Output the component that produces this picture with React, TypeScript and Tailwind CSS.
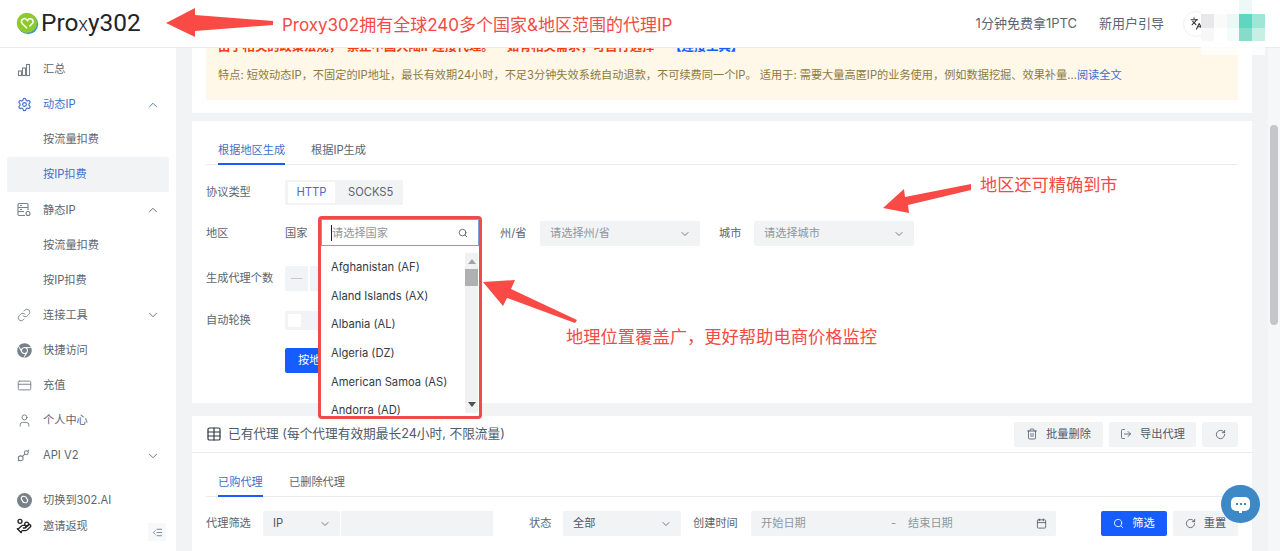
import {
  Calendar,
  ChevronDown,
  ChevronUp,
  CreditCard,
  HandCoins,
  IndentDecrease,
  Languages,
  Link,
  LogOut,
  RotateCw,
  Search,
  Settings,
  Table,
  Trash2,
  User,
} from 'lucide-react'
import { FaChrome } from 'react-icons/fa'

const font = { cjk: "font-['Inter','Noto_Sans_CJK_SC',sans-serif]" }

const countries = [
  'Afghanistan (AF)',
  'Aland Islands (AX)',
  'Albania (AL)',
  'Algeria (DZ)',
  'American Samoa (AS)',
  'Andorra (AD)',
]

function NavItem({ icon, label, active, chevron }: { icon: React.ReactNode; label: string; active?: boolean; chevron?: 'up' | 'down' }) {
  return (
    <div className={`flex h-[35.1px] items-center pl-[17px] pr-[16px] ${active ? 'text-[#3f6fc9]' : 'text-[#5c6570]'}`}>
      <span className={`flex w-[26px] shrink-0 ${active ? '' : 'text-[#78808a]'}`}>{icon}</span>
      <span className="flex-1">{label}</span>
      {chevron === 'up' && <ChevronUp className="h-[14px] w-[14px]" strokeWidth={1.5} />}
      {chevron === 'down' && <ChevronDown className="h-[14px] w-[14px]" strokeWidth={1.5} />}
    </div>
  )
}

function SubItem({ label, active }: { label: string; active?: boolean }) {
  return (
    <div className={`mx-[7px] flex h-[35.1px] items-center rounded-[2px] pl-[36px] ${active ? 'bg-[#f2f3f5] text-[#3f6fc9]' : 'text-[#5c6570]'}`}>
      {label}
    </div>
  )
}

function BarsIcon() {
  return (
    <svg viewBox="0 0 14 14" className="h-[14px] w-[14px]" fill="none" stroke="currentColor" strokeWidth="1.1">
      <path d="M1 12.5h12" />
      <rect x="1.5" y="8" width="3" height="4.5" />
      <rect x="5.5" y="5" width="3" height="7.5" />
      <rect x="9.5" y="1.5" width="3" height="11" />
    </svg>
  )
}

function StorageIcon() {
  return (
    <svg viewBox="0 0 14 15" className="h-[15px] w-[14px]" fill="none" stroke="currentColor" strokeWidth="1.1">
      <path d="M8 13.5H2a1 1 0 0 1-1-1v-10a1 1 0 0 1 1-1h8a1 1 0 0 1 1 1V8" />
      <path d="M1 5.5h10M1 9.5h6" />
      <path d="M3 3.5h2M3 7.5h2" />
      <circle cx="11" cy="11.5" r="2" />
    </svg>
  )
}

function ApiIcon() {
  return (
    <svg viewBox="0 0 14 14" className="h-[13px] w-[13px]" fill="none" stroke="currentColor" strokeWidth="1.1">
      <circle cx="4" cy="10" r="2.6" />
      <circle cx="10" cy="4" r="2.1" />
      <path d="M6 8l2.4-2.4M11.5 2.5l1.5-1.5M1 13l1-1" />
    </svg>
  )
}

function SwitchIcon() {
  return (
    <svg viewBox="0 0 15 15" className="mr-[11px] h-[15px] w-[15px]">
      <circle cx="7.5" cy="7.5" r="7.5" fill="#78808a" />
      <path d="M7.5 3.5a2 2 0 0 1 2 2 2 2 0 1 1-2 4 2 2 0 0 1-2-2 2 2 0 1 1 2-4z" fill="none" stroke="#fff" strokeWidth="1.1" />
    </svg>
  )
}

function Sidebar() {
  const ic = 'h-[15px] w-[15px]'
  return (
    <aside className="relative flex w-[176px] shrink-0 flex-col bg-white pt-[4px] text-[11.2px]">
      <NavItem icon={<BarsIcon />} label="汇总" />
      <NavItem icon={<Settings className={ic} strokeWidth={1.8} />} label="动态IP" active chevron="up" />
      <SubItem label="按流量扣费" />
      <SubItem label="按IP扣费" active />
      <NavItem icon={<StorageIcon />} label="静态IP" chevron="up" />
      <SubItem label="按流量扣费" />
      <SubItem label="按IP扣费" />
      <NavItem icon={<Link className="h-[14px] w-[14px]" strokeWidth={1.5} />} label="连接工具" chevron="down" />
      <NavItem icon={<FaChrome className={ic} />} label="快捷访问" />
      <NavItem icon={<CreditCard className={ic} strokeWidth={1.5} />} label="充值" />
      <NavItem icon={<User className={ic} strokeWidth={1.5} />} label="个人中心" />
      <NavItem icon={<ApiIcon />} label="API V2" chevron="down" />
      <div className="mt-[14px] flex h-[26px] items-center pl-[17px] text-[#5c6570]">
        <SwitchIcon />
        切换到302.AI
      </div>
      <div className="flex h-[26px] items-center pl-[16px] text-[#5c6570]">
        <HandCoins className="mr-[11px] h-[16px] w-[16px] text-[#222]" strokeWidth={2} />
        邀请返现
      </div>
      <div className="absolute bottom-[10px] right-[10px] flex h-[18px] w-[18px] items-center justify-center bg-[#f7f8fa]">
        <IndentDecrease className="h-[11px] w-[11px] text-[#4e5969]" strokeWidth={1.5} />
      </div>
    </aside>
  )
}

function Label({ children, className = '' }: { children: React.ReactNode; className?: string }) {
  return <span className={`text-[11.2px] text-[#5c6570] ${className}`}>{children}</span>
}

function Select({ text, width, placeholder }: { text: string; width: string; placeholder?: boolean }) {
  return (
    <div className={`flex h-[25px] items-center justify-between rounded-[2px] bg-[#f2f3f5] pl-[10px] pr-[9px] ${width}`}>
      <span className={placeholder ? 'text-[#8f97a1]' : 'text-[#4e5969]'}>{text}</span>
      <ChevronDown className="h-[12px] w-[12px] text-[#4e5969]" strokeWidth={1.6} />
    </div>
  )
}

function Tabs({ active, other, width }: { active: string; other: string; width: string }) {
  return (
    <div className="flex h-[30px] border-b border-[#e9ebef] pl-[12px] text-[11.2px]">
      <div className={`relative flex h-[30px] items-start whitespace-nowrap pt-[7px] text-[#3f6fc9] ${width}`}>
        {active}
        <span className="absolute bottom-0 left-0 h-[2px] w-full bg-[#165dff]" />
      </div>
      <div className="ml-[26px] pt-[7px] text-[#5c6570]">{other}</div>
    </div>
  )
}

function GreyButton({ icon, label, width }: { icon: React.ReactNode; label?: string; width: string }) {
  return (
    <div className={`flex h-[25px] items-center justify-center gap-[8px] rounded-[2px] bg-[#f2f3f5] text-[11.2px] text-[#4e5969] ${width}`}>
      {icon}
      {label && <span>{label}</span>}
    </div>
  )
}

function Dropdown() {
  return (
    <div className="absolute left-[318px] top-[216px] z-20 h-[203px] w-[164px] overflow-hidden rounded-[4px] border-[3px] border-[#f04a4a] bg-white">
      <div className="flex h-[27px] items-center justify-between border border-[#7d9fd8] pl-[9px] pr-[10px] pt-[1px] text-[11.2px] text-[#8f97a1]">
        <span className="border-l border-[#222]">请选择国家</span>
        <Search className="h-[10px] w-[10px] text-[#4e5969]" strokeWidth={2} />
      </div>
      <div className="flex h-[170px] pt-[7px]">
        <div className="flex-1 pl-[10px] text-[11.2px] text-[#333b45]">
          {countries.map((c) => (
            <div key={c} className="flex h-[28.7px] items-center whitespace-nowrap">
              {c}
            </div>
          ))}
        </div>
        <div className="relative mr-[1px] h-[160px] w-[13px] bg-[#f1f1f1]">
          <span className="absolute left-[3px] top-[6px] h-0 w-0 border-x-[4px] border-b-[5px] border-x-transparent border-b-[#a3a3a3]" />
          <div className="absolute top-[16px] h-[17px] w-full bg-[#b0b0b0]" />
          <span className="absolute bottom-[6px] left-[3px] h-0 w-0 border-x-[4px] border-t-[5px] border-x-transparent border-t-[#505050]" />
        </div>
      </div>
    </div>
  )
}

export default function App() {
  return (
    <div className={`relative flex h-screen flex-col overflow-hidden bg-[#f2f3f5] ${font.cjk}`}>
      {/* Header */}
      <header className="relative z-10 flex h-[48px] shrink-0 items-center border-b border-[#e9ebef] bg-white pl-[16px] pr-[71px]">
        <svg viewBox="0 0 24 24" className="mr-[2px] h-[23px] w-[23px]">
          <circle cx="12.6" cy="12.6" r="10.6" fill="#3f96d8" />
          <circle cx="11.4" cy="11.4" r="10.6" fill="#8ccb2a" />
          <path d="M11.5 17 L6.5 12 a3 3 0 0 1 4.5 -4 l1 1 a3 3 0 1 1 4.5 3.5 L14 15" fill="none" stroke="#fff" strokeWidth="1.6" />
        </svg>
        <span className="text-[24.4px] leading-none text-[#20242a] font-['Roboto',sans-serif]">
          Pro<span className="text-[20px] font-light">x</span>y302
        </span>
        <div className="ml-auto flex items-center text-[13px] text-[#5c6570]">
          <span>1分钟免费拿1PTC</span>
          <span className="ml-[22px]">新用户引导</span>
          <span className="ml-[19px] flex h-[26px] w-[26px] items-center justify-center rounded-full border border-[#eef0f2]">
            <Languages className="h-[13px] w-[13px] text-[#333]" strokeWidth={2} />
          </span>
        </div>
      </header>

      <div className="flex min-h-0 flex-1">
        <Sidebar />

        <main className="flex min-w-0 flex-1 flex-col gap-[8px] overflow-hidden pl-[16px] pr-[16px]">
          {/* Notice */}
          <section className="-mt-[20px] h-[85px] shrink-0 bg-white px-[14px] pt-[8px]">
            <div className="h-[64px] bg-[#fff7e8] pl-[12px] text-[11.2px]">
              <div className="h-[31px] whitespace-nowrap text-[12.3px] font-bold leading-[22px] text-[#f0400f]">
                <span>由于相关的政策法规，</span>
                <span className="ml-[6px]">禁止中国大陆IP连接代理。</span>
                <span className="ml-[13px]">如有相关需求，可自行选择</span>
                <span className="ml-[15px] text-[#165dff]">【连接工具】</span>
              </div>
              <div className="whitespace-nowrap text-[#8d7a3f]">
                特点: 短效动态IP，不固定的IP地址，最长有效期24小时，不足3分钟失效系统自动退款，不可续费同一个IP。 适用于: 需要大量高匿IP的业务使用，例如数据挖掘、效果补量...
                <span className="text-[#3f6fc9]">阅读全文</span>
              </div>
            </div>
          </section>

          {/* Generate */}
          <section className="h-[282px] shrink-0 bg-white px-[14px] pt-[14px] text-[11.2px]">
            <Tabs active="根据地区生成" other="根据IP生成" width="w-[67px]" />
            <div className="mt-[15px] flex items-center">
              <Label className="w-[79px]">协议类型</Label>
              <div className="flex h-[25px] w-[118px] items-center rounded-[2px] bg-[#f2f3f5] p-[2px] pl-[3px]">
                <span className="flex h-[21px] w-[47px] items-center justify-center bg-white text-[#3f6fc9]">HTTP</span>
                <span className="ml-[13px] text-[#5c6570]">SOCKS5</span>
              </div>
            </div>
            <div className="mt-[16px] flex items-center">
              <Label className="w-[79px]">地区</Label>
              <Label className="w-[36px]">国家</Label>
              <div className="h-[25px] w-[157px]" />
              <Label className="ml-[22px] w-[40px]">州/省</Label>
              <Select text="请选择州/省" width="w-[160px]" placeholder />
              <Label className="ml-[19px] w-[35px]">城市</Label>
              <Select text="请选择城市" width="w-[160px]" placeholder />
            </div>
            <div className="mt-[20px] flex items-center">
              <Label className="w-[79px]">生成代理个数</Label>
              <div className="flex h-[25px] w-[120px] rounded-[2px] bg-[#f2f3f5]">
                <span className="flex w-[25px] items-center justify-center border-r-2 border-white text-[#c3c8cf]">—</span>
              </div>
            </div>
            <div className="mt-[20px] flex items-center">
              <Label className="w-[79px]">自动轮换</Label>
              <div className="flex h-[19px] w-[40px] items-center rounded-[2px] bg-[#f2f3f5] pl-[3px]">
                <span className="h-[13px] w-[13px] bg-white" />
              </div>
            </div>
            <div className="ml-[79px] mt-[18px] flex h-[25px] w-[60px] items-center rounded-[2px] bg-[#165dff] pl-[13px] text-white">
              按地
            </div>
          </section>

          {/* Proxy list */}
          <section className="mt-[5px] flex-1 bg-white text-[11.2px]">
            <div className="flex h-[37px] items-center border-b border-[#e9ebef] px-[14px]">
              <Table className="mr-[6px] h-[16px] w-[16px] text-[#333b45]" strokeWidth={1.8} />
              <span className="text-[12.7px] text-[#4e5969]">已有代理 (每个代理有效期最长24小时, 不限流量)</span>
              <div className="ml-auto flex gap-[6px]">
                <GreyButton icon={<Trash2 className="h-[12px] w-[12px]" strokeWidth={1.6} />} label="批量删除" width="w-[89px]" />
                <GreyButton icon={<LogOut className="h-[12px] w-[12px]" strokeWidth={1.6} />} label="导出代理" width="w-[87px]" />
                <GreyButton icon={<RotateCw className="h-[11px] w-[11px]" strokeWidth={1.8} />} width="w-[36px]" />
              </div>
            </div>
            <div className="px-[14px] pt-[14px]">
              <Tabs active="已购代理" other="已删除代理" width="w-[45px]" />
              <div className="mt-[14px] flex items-center">
                <Label className="w-[57px]">代理筛选</Label>
                <Select text="IP" width="w-[77px]" />
                <div className="ml-[1px] h-[25px] w-[152px] bg-[#f2f3f5]" />
                <Label className="ml-[36px] w-[34px]">状态</Label>
                <Select text="全部" width="w-[118px]" />
                <Label className="ml-[12px] w-[58px]">创建时间</Label>
                <div className="flex h-[25px] w-[305px] items-center rounded-[2px] bg-[#f2f3f5] pl-[10px] pr-[9px] text-[#8f97a1]">
                  <span className="w-[130px]">开始日期</span>
                  <span className="w-[17px]">-</span>
                  <span>结束日期</span>
                  <Calendar className="ml-auto h-[11px] w-[11px] text-[#4e5969]" strokeWidth={1.8} />
                </div>
                <div className="ml-[45px] flex h-[25px] w-[66px] items-center justify-center gap-[8px] rounded-[2px] bg-[#165dff] text-white">
                  <Search className="h-[11px] w-[11px]" strokeWidth={1.8} />
                  筛选
                </div>
                <GreyButton icon={<RotateCw className="h-[11px] w-[11px]" strokeWidth={1.8} />} label="重置" width="ml-[6px] w-[65px]" />
              </div>
            </div>
          </section>
        </main>

        {/* Scrollbar */}
        <div className="w-[12px] shrink-0 bg-[#f6f7f8] pt-[77px]">
          <div className="ml-[2px] h-[200px] w-[8px] rounded-full bg-[#c4c6ca]" />
        </div>
      </div>

      <Dropdown />

      {/* Screenshot annotations */}
      <svg className="pointer-events-none absolute left-0 top-0 z-20 h-[551px] w-[1280px]" viewBox="0 0 1280 551">
        <polygon points="166,23 195,8 195,15 273,21 273,25 195,31 195,37" fill="#f94a46" />
        <polygon points="883,208 904,189 905,197 971,184 971,190 908,205 909,213" fill="#f94a46" />
        <polygon points="483,282 515,280 511,289 577,320 575,323 507,298 503,306" fill="#f94a46" />
      </svg>
      <span className="absolute left-[282px] top-[13px] z-20 whitespace-nowrap text-[17px] leading-[24px] text-[#f44a46]">
        Proxy302拥有全球240多个国家&amp;地区范围的代理IP
      </span>
      <span className="absolute left-[980px] top-[173px] z-20 whitespace-nowrap text-[17.2px] leading-[24px] text-[#f44a46]">
        地区还可精确到市
      </span>
      <span className="absolute left-[566px] top-[325px] z-20 whitespace-nowrap text-[17.3px] leading-[24px] text-[#f44a46]">
        地理位置覆盖广，更好帮助电商价格监控
      </span>

      {/* Blurred avatar */}
      <div className="absolute left-[1201px] top-0 z-20 grid h-[55px] w-[64px] grid-cols-5 grid-rows-4 bg-white/80">
        <span />
        <span />
        <span />
        <span className="bg-[#eef9f7]" />
        <span />
        <span className="bg-[#e8e8ea]" />
        <span className="bg-[#fafafa]" />
        <span className="bg-[#ecf8f6]" />
        <span className="bg-[#5ed6c0]" />
        <span className="bg-[#a0e6d6]" />
        <span className="bg-[#f7f7f7]" />
        <span className="bg-white" />
        <span className="bg-[#f5fbfa]" />
        <span className="bg-[#86dcc8]" />
        <span className="bg-[#c8efe6]" />
      </div>

      {/* Chat bubble */}
      <div className="absolute left-[1221px] top-[485px] z-20 flex h-[38px] w-[39px] items-center justify-center rounded-full bg-[#3d88c6]">
        <div className="relative flex h-[14px] w-[19px] items-center justify-center gap-[2px] rounded-[5px] bg-white">
          <span className="h-[2px] w-[2px] bg-[#3d88c6]" />
          <span className="h-[2px] w-[2px] bg-[#3d88c6]" />
          <span className="h-[2px] w-[2px] bg-[#3d88c6]" />
          <span className="absolute -bottom-[2px] left-[8px] h-[3px] w-[3px] bg-white" />
        </div>
      </div>
    </div>
  )
}
